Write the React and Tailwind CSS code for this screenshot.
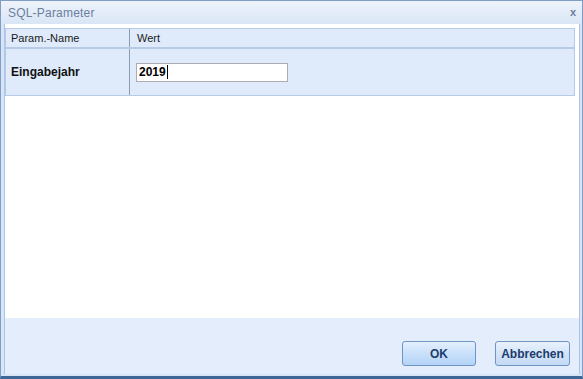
export default function App() {
  return (
    <div
      className="w-[583px] h-[379px] bg-white overflow-hidden"
      style={{ fontFamily: '"Liberation Sans", Arial, sans-serif' }}
    >
      {/* Window frame */}
      <div className="w-full h-full flex flex-col border border-[#7f9dc6] border-b-[3px] border-b-[#3d6797] bg-[#d8e5f6]">
        {/* Title bar */}
        <div className="h-[23px] shrink-0 flex items-center justify-between pl-[7px] pr-[6px] bg-gradient-to-b from-[#eef3fb] to-[#d9e6f6]">
          <span className="text-[12px] text-[#6b7f9d] tracking-[0.2px]">SQL-Parameter</span>
          <span className="text-[11px] font-bold text-[#6c7f98] leading-none">x</span>
        </div>

        {/* Body */}
        <div className="flex-1 flex flex-col pl-[3px] pr-[2px] pb-[2px]">
          <div className="flex-1 flex flex-col border-l border-r border-[#aec4e2] bg-white">
            {/* Table area */}
            <div className="flex-1 bg-white pt-[4px] pl-0 pr-[4px]">
              <div className="border border-[#b7cbe6] bg-[#dfeafa]">
                {/* Header row */}
                <div className="flex h-[20px] border-b-2 border-[#b7cbe6] text-[11px] text-[#1a1a1a]">
                  <div className="w-[124px] flex items-center pl-[5px] border-r border-[#8a9bb3]">Param.-Name</div>
                  <div className="flex items-center pl-[7px]">Wert</div>
                </div>
                {/* Data row */}
                <div className="flex h-[46px] text-[12px] text-[#111]">
                  <div className="w-[124px] flex items-center pl-[5px] font-bold border-r border-[#8a9bb3]">
                    Eingabejahr
                  </div>
                  <div className="flex items-center pl-[6px]">
                    <div className="w-[152px] h-[19px] bg-white border border-[#abadb3] flex items-center pl-[2px] text-[12px] font-bold text-black">
                      2019<span className="w-px h-[14px] bg-black ml-px" />
                    </div>
                  </div>
                </div>
              </div>
            </div>

            {/* Button bar */}
            <div className="h-[56px] shrink-0 bg-[#e3edfc] flex items-end justify-end gap-[19px] pr-[9px] pb-[8px]">
              <button className="w-[74px] h-[25px] rounded-[3px] border border-[#6e95c6] bg-gradient-to-b from-[#e4f0fd] via-[#c9e0fa] to-[#b4d3f6] text-[12px] font-bold text-[#1d3b6b]">
                OK
              </button>
              <button className="w-[75px] h-[25px] rounded-[3px] border border-[#6e95c6] bg-gradient-to-b from-[#eaf2fc] via-[#d3e4f8] to-[#c4daf4] text-[12px] font-bold text-[#1d3b6b]">
                Abbrechen
              </button>
            </div>
          </div>
        </div>
      </div>
    </div>
  );
}
